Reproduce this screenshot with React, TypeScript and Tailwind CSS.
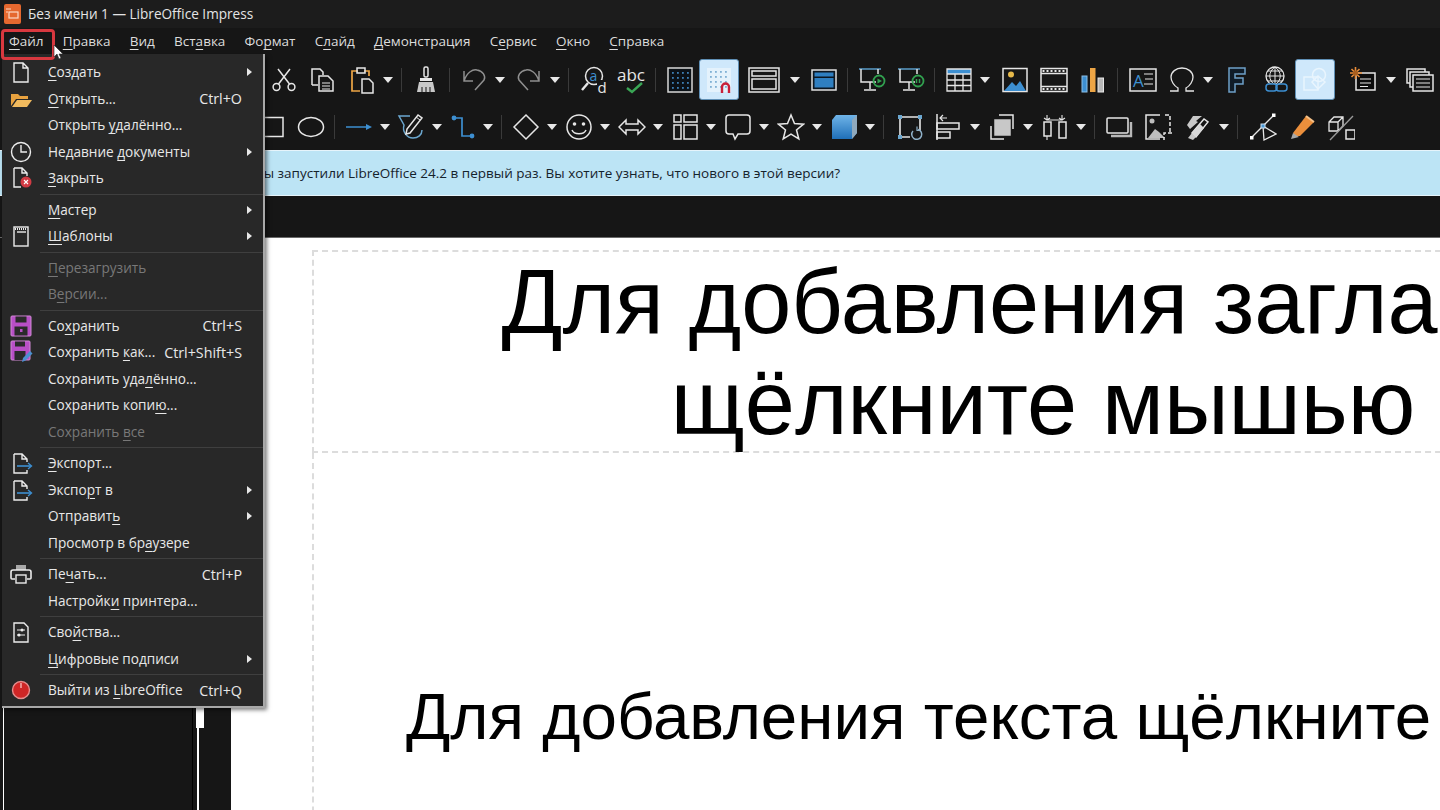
import type { ReactNode } from 'react'

const W = '#e6e6e6'
const BLUE = '#3d8fd1'

function Ic({ children, w = 28 }: { children: ReactNode; w?: number }) {
  return (
    <svg width={w} height={28} viewBox={`0 0 ${w} 28`} fill="none" stroke={W} strokeWidth="1.5">
      {children}
    </svg>
  )
}

function B({ children, className = 'w-[39px]' }: { children?: ReactNode; className?: string }) {
  return <div className={`flex h-[40px] shrink-0 items-center justify-center ${className}`}>{children}</div>
}

function Active({ children }: { children?: ReactNode }) {
  return (
    <div className="flex h-[41px] w-[40px] shrink-0 items-center justify-center rounded-[3px] border border-[#5f8fb5] bg-[#cfe8fb]">
      {children}
    </div>
  )
}

function A({ className = 'w-[14px]' }: { className?: string }) {
  return (
    <div className={`flex h-[40px] shrink-0 items-center pl-[2px] ${className}`}>
      <svg width="10" height="6" viewBox="0 0 10 6">
        <polygon points="0,0 10,0 5,6" fill="#e8e8e8" />
      </svg>
    </div>
  )
}

function S({ className = 'w-[9px]' }: { className?: string }) {
  return (
    <div className={`flex h-[40px] shrink-0 items-center justify-center ${className}`}>
      <div className="h-[24px] w-px bg-[#3a3a3a]" />
    </div>
  )
}

function Label({ text }: { text: string }) {
  const i = text.indexOf('&')
  if (i < 0) return <>{text}</>
  return (
    <>
      {text.slice(0, i)}
      <span className="underline decoration-1 underline-offset-[3px]">{text[i + 1]}</span>
      {text.slice(i + 2)}
    </>
  )
}

/* toolbar icons */
const Cut = () => (
  <Ic>
    <circle cx="6.5" cy="21" r="3.4" />
    <circle cx="21.5" cy="21" r="3.4" />
    <path d="M8.500 18 20 3M19.500 18 8 3" />
  </Ic>
)
const Copy = () => (
  <Ic>
    <path d="M3 19V3h8l3 3v3M3 19h6" />
    <path d="M10 10h9l5 5v10H10z" />
    <path d="M13 17h8M13 20h8M13 23h8" strokeWidth="1" />
  </Ic>
)
const Paste = () => (
  <Ic>
    <path d="M10 5H4v20h8" stroke="#eda545" strokeWidth="1.7" />
    <path d="M16 5h5v5" stroke="#eda545" strokeWidth="1.7" />
    <rect x="9" y="2" width="8" height="5" stroke="#e6e6e6" />
    <path d="M14 13h7l4 4v10H14z" fill="#161616" />
  </Ic>
)
const Brush = () => (
  <Ic>
    <rect x="12" y="1" width="4" height="10" rx="1.500" />
    <path d="M8 12h12v3H8z" fill={W} stroke="none" />
    <path d="M7 16h14l2 10H5z" fill="#c8c8c8" stroke="none" />
    <path d="M10 21v5M14 21v5M18 21v5" stroke="#161616" strokeWidth="1" />
  </Ic>
)
const Undo = () => (
  <Ic>
    <g stroke="#8f8f8f" transform="translate(28 0) scale(-1 1)">
      <path d="M24 5v10H15M24 15C21 6 15 3 11 4 5 5 2 10 4 14l9 10" />
    </g>
  </Ic>
)
const Redo = () => (
  <Ic>
    <g stroke="#8f8f8f">
      <path d="M24 5v10H15M24 15C21 6 15 3 11 4 5 5 2 10 4 14l9 10" />
    </g>
  </Ic>
)
const Find = () => (
  <Ic>
    <circle cx="15" cy="10" r="8.500" />
    <path d="M9 17 3 24" strokeWidth="2.400" />
    <text x="10.500" y="15" fontSize="14" fill={BLUE} stroke="none" fontFamily="Open Sans, sans-serif">a</text>
    <rect x="18" y="14" width="9" height="14" fill="#161616" stroke="none" />
    <text x="18.500" y="27" fontSize="15" fill={W} stroke="none" fontFamily="Open Sans, sans-serif">d</text>
  </Ic>
)
const Spell = () => (
  <Ic w={32}>
    <text x="1" y="15" fontSize="17" fill={W} stroke="none" fontFamily="Open Sans, sans-serif">abc</text>
    <path d="M11 22l5 4 10-9" stroke="#3aa655" strokeWidth="2.4" />
  </Ic>
)
const Grid = () => (
  <Ic>
    <rect x="2" y="2" width="24" height="24" fill="#0b1116" stroke="#d8d8d8" />
    <g fill="#3d7fb3">
      {[6, 11, 16, 21].flatMap(x => [6, 11, 16, 21].map(y => <rect key={`${x}${y}`} x={x} y={y} width="1.800" height="1.800" stroke="none" />))}
    </g>
  </Ic>
)
const Snap = () => (
  <Ic>
    <rect x="2" y="2" width="24" height="24" fill="#e4f2fc" stroke="none" />
    <g fill="#7fb0d4">
      {[5, 10, 15, 20].flatMap(x => [5, 10, 15, 20].map(y => <rect key={`${x}${y}`} x={x} y={y} width="1.800" height="1.800" stroke="none" />))}
    </g>
    <path d="M17 27v-6a3.200 3.200 0 0 1 7 0v6" stroke="#c8203a" strokeWidth="2.400" />
  </Ic>
)
const Display = () => (
  <Ic w={32}>
    <rect x="1" y="2" width="30" height="24" />
    <rect x="4" y="5" width="24" height="5" />
    <rect x="4" y="13" width="24" height="10" />
  </Ic>
)
const Master = () => (
  <Ic>
    <rect x="2" y="4" width="24" height="20" fill="#0c1620" stroke="#e0e0e0" />
    <rect x="4.500" y="6.500" width="19" height="4" fill="#2f7fc1" stroke="none" />
    <rect x="4.500" y="12" width="19" height="9.500" fill="#2f7fc1" stroke="none" />
  </Ic>
)
const Present = ({ pause }: { pause?: boolean }) => (
  <Ic>
    <path d="M1 3h22" stroke="#5a9cc9" />
    <path d="M3 3v13h15M20 3v5" />
    <path d="M12 16v7M6 24h12" />
    <circle cx="21" cy="15" r="5.500" stroke="#31a04f" strokeWidth="1.800" />
    {pause ? <path d="M19.500 13v4M22.500 13v4" stroke="#31a04f" /> : <polygon points="19.500,12.500 24,15 19.500,17.500" fill="#31a04f" stroke="none" />}
  </Ic>
)
const Table = () => (
  <Ic>
    <rect x="2" y="3" width="24" height="5" fill="#3d8fd1" stroke="none" />
    <path d="M2 3h24v22H2zM2 8h24M2 14h24M2 19.500h24M10 8v17M18 8v17" strokeWidth="1.300" />
  </Ic>
)
const ImageIc = () => (
  <Ic>
    <rect x="2" y="2.500" width="24" height="23" />
    <path d="M3 25l8-9 4 4 4-5 6 10z" fill={BLUE} stroke="none" />
    <circle cx="10" cy="8.500" r="3" fill="#e6b94a" stroke="none" />
  </Ic>
)
const Film = () => (
  <Ic>
    <rect x="1" y="2.500" width="26" height="23" />
    <path d="M1 7.500h26M1 20.500h26" />
    <path d="M2.500 5h23M2.500 23h23" strokeDasharray="2 2" strokeWidth="2" />
  </Ic>
)
const Chart = () => (
  <Ic>
    <rect x="3" y="10" width="5" height="16" fill={BLUE} stroke="#8cc0e8" strokeWidth="1" />
    <rect x="11" y="2" width="5.500" height="24" fill="#eda545" stroke="none" />
    <rect x="19" y="12" width="5.500" height="14" fill="#b8b8b8" stroke={W} strokeWidth="1" />
  </Ic>
)
const TextBox = () => (
  <Ic>
    <rect x="1" y="3" width="26" height="22" />
    <text x="4" y="21" fontSize="17" fill={BLUE} stroke="none" fontFamily="Open Sans, sans-serif">A</text>
    <path d="M15 8h9M16 13h8M15 18h9" strokeWidth="1.200" />
  </Ic>
)
const Omega = () => (
  <Ic>
    <path d="M2 25h8v-3C6 20 3 15 3 11 3 6 8 2 14 2s11 4 11 9c0 4-3 9-7 11v3h8" strokeWidth="1.300" />
  </Ic>
)
const Fontwork = () => (
  <Ic>
    <path d="M6 26V2h16v6H12v4h8v6h-8v8z" stroke="#6ea0c8" fill="#101c28" strokeWidth="1.500" />
  </Ic>
)
const Link = () => (
  <Ic>
    <circle cx="13" cy="10" r="9" strokeWidth="1.300" />
    <path d="M4 10h18M6 5h14M6 15h14M13 1v18M13 1c-7 5-7 13 0 18M13 1c7 5 7 13 0 18" strokeWidth="1" />
    <rect x="4" y="18" width="11" height="7" rx="3" stroke={BLUE} fill="#161616" strokeWidth="1.500" />
    <rect x="14" y="18" width="11" height="7" rx="3" stroke={BLUE} strokeWidth="1.500" />
  </Ic>
)
const Shapes = () => (
  <Ic>
    <g stroke="#e9f5fe" strokeWidth="1.500">
      <rect x="3" y="11" width="14" height="13" />
      <circle cx="18" cy="9" r="6.500" />
      <path d="M17 10l7 6-7 7-6-7z" />
    </g>
  </Ic>
)
const Anim = () => (
  <Ic>
    <rect x="7" y="7" width="19" height="17" fill="#0c0c0c" />
    <path d="M11 13h11M11 17h11M11 20.500h8" strokeWidth="1" />
    <path d="M6.500 1v12M1 7h12M2.500 3l8 8M10.500 3l-8 8" stroke="#e88c3a" strokeWidth="1.600" />
    <circle cx="6.500" cy="7" r="2.600" fill="#a95f1f" stroke="none" />
  </Ic>
)
const Slide = () => (
  <Ic>
    <rect x="1" y="3" width="18" height="14" />
    <rect x="4" y="6" width="19" height="15" fill="#161616" />
    <rect x="7" y="9" width="20" height="16" fill="#161616" />
    <path d="M10 13h14M10 17h14M10 21h14" strokeWidth="1.200" />
  </Ic>
)
const Rect = () => (
  <Ic>
    <rect x="3" y="4.500" width="22" height="19" />
  </Ic>
)
const Ellipse = () => (
  <Ic>
    <ellipse cx="14" cy="14" rx="12.500" ry="9.500" />
  </Ic>
)
const LineArrow = () => (
  <Ic>
    <path d="M1 14h21" stroke={BLUE} />
    <polygon points="21,11 27,14 21,17" fill={BLUE} stroke="none" />
  </Ic>
)
const Curve = () => (
  <Ic>
    <path d="M13 3H2l5 9c-2 7 3 13 9 13 5 0 9-3 9-8" stroke="#6ba7cf" />
    <path d="M9 21l1-5L21 2l4 3-12 15z" fill="#161616" />
    <path d="M19 4l4 3" strokeWidth="1" />
  </Ic>
)
const Connector = () => (
  <Ic>
    <path d="M5 5h8v18h10" stroke={BLUE} strokeWidth="1.700" />
    <circle cx="5" cy="5" r="2.400" fill={BLUE} stroke="none" />
    <circle cx="23" cy="23" r="2.400" fill={BLUE} stroke="none" />
  </Ic>
)
const Diamond = () => (
  <Ic>
    <path d="M14 2 26 14 14 26 2 14z" />
  </Ic>
)
const Smile = () => (
  <Ic>
    <circle cx="14" cy="14" r="12" />
    <circle cx="9.500" cy="11" r="1.800" fill={W} stroke="none" />
    <circle cx="18.500" cy="11" r="1.800" fill={W} stroke="none" />
    <path d="M7 17c2 5 12 5 14 0" />
  </Ic>
)
const DblArrow = () => (
  <Ic>
    <path d="M8 7 1 14l7 7v-4h12v4l7-7-7-7v4H8z" />
  </Ic>
)
const Layout = () => (
  <Ic>
    <path d="M3 2h7v7H3zM13 2h13v7H13zM3 12h7v14H3zM13 12h13v14H13z" />
  </Ic>
)
const Callout = () => (
  <Ic>
    <path d="M5 2h18a3 3 0 0 1 3 3v13a3 3 0 0 1-3 3h-9l-3 5-2-5H5a3 3 0 0 1-3-3V5a3 3 0 0 1 3-3z" />
  </Ic>
)
const Star = () => (
  <Ic>
    <path d="M14 2l3.500 8.500 9 .7-7 5.800 2.300 9-7.800-4.800L6.200 26l2.300-9-7-5.800 9-.7z" />
  </Ic>
)
const Cube = () => (
  <Ic>
    <defs>
      <linearGradient id="cube" x1="0" y1="0" x2="0" y2="1">
        <stop offset="0" stopColor="#6fb4e8" />
        <stop offset="1" stopColor="#1f6fb8" />
      </linearGradient>
    </defs>
    <path d="M6 2h21v18l-5 6H2V7z" fill="url(#cube)" stroke="none" />
    <path d="M22 7v19l5-6V2z" fill="#8fa9bd" stroke="none" />
  </Ic>
)
const Rotate = () => (
  <Ic>
    <path d="M4 4h20v13M4 4v20h10" strokeWidth="1.600" />
    <g fill="#6ba7cf" stroke="none">
      <rect x="2" y="2" width="4" height="4" />
      <rect x="22" y="2" width="4" height="4" />
      <rect x="2" y="22" width="4" height="4" />
    </g>
    <path d="M17 18a5 5 0 1 0 5-1.500" stroke="#8fb1c9" />
    <path d="M21 13.500v4h4" stroke="#8fb1c9" strokeWidth="1.200" />
  </Ic>
)
const Align = () => (
  <Ic>
    <path d="M2 1v26" />
    <path d="M12 5H5m3-3L5 5l3 3" strokeWidth="1.200" />
    <rect x="2" y="10" width="22" height="6" />
    <rect x="2" y="19" width="13" height="6" />
  </Ic>
)
const Arrange = () => (
  <Ic>
    <path d="M11 2h14v14M3 13v13h13" />
    <rect x="7" y="7" width="15" height="15" fill="#c8c8c8" stroke="#c8c8c8" />
  </Ic>
)
const Distribute = () => (
  <Ic>
    <rect x="3" y="9" width="7" height="14" />
    <rect x="18" y="9" width="7" height="16" />
    <path d="M6 2v5M21 2v5M3 5l3 2 3-2M18 5l3 2 3-2M6 7h15M6 23v4" strokeWidth="1.100" />
  </Ic>
)
const Shadow = () => (
  <Ic>
    <rect x="1" y="5" width="21" height="15" rx="1" />
    <path d="M25 9v14H5" stroke="#b8b8b8" strokeWidth="2.400" />
  </Ic>
)
const Crop = () => (
  <Ic>
    <path d="M15 2H1v24h14" />
    <path d="M3 25l7-9 4 3 6 6z" fill="#bdbdbd" stroke="none" />
    <circle cx="7" cy="8" r="2.500" fill="#bdbdbd" stroke="none" />
    <path d="M20 2h5v18M27 20H19v7" strokeDasharray="4 2" />
  </Ic>
)
const Filter = () => (
  <Ic>
    <path d="M3 12 9 3h9l-6 5 2 1-8 7z" fill="#c8c8c8" stroke="none" />
    <path d="M8 20 20 6l4 3-12 15z" />
    <path d="M4 25l4-5 4 4-3 3z" fill="#c8c8c8" stroke="none" />
    <path d="M8 20 16 11l4 4-8 9z" fill="#d8d8d8" stroke="none" />
  </Ic>
)
const Points = () => (
  <Ic>
    <path d="M25 2 2 25M14 13l13 8-12 6z" strokeWidth="1.300" />
    <rect x="23" y="0.500" width="3.500" height="3.500" fill="#fff" stroke="none" />
    <rect x="1" y="23" width="3.500" height="3.500" fill="#fff" stroke="none" />
    <rect x="12" y="11" width="4" height="4" fill="#4a9ad6" stroke="#cde" strokeWidth="1" />
  </Ic>
)
const Marker = () => (
  <Ic>
    <path d="M5 20 18 3l8 6-14 14-5 0z" fill="#ea8f3c" stroke="none" />
    <path d="M18 3l8 6" stroke="#f4c189" strokeWidth="2" />
    <path d="M5 20l-2 6 8-2z" fill="#a8a8a8" stroke="none" />
  </Ic>
)
const Toggle3d = () => (
  <Ic>
    <path d="M2 9l5-5h9v9l-5 5H2zM2 9h9v9M11 9l5-5" strokeWidth="1.300" />
    <path d="M3 27 26 3" stroke="#9a9a9a" strokeWidth="1.300" />
    <rect x="19" y="17" width="9" height="9" strokeWidth="1.500" />
  </Ic>
)

/* menu icons */
const Mi = ({ children }: { children: ReactNode }) => (
  <svg width="24" height="24" viewBox="0 0 24 24" fill="none" stroke="#ececec" strokeWidth="1.400">
    {children}
  </svg>
)
const MNew = () => (
  <Mi>
    <path d="M5 3h9l5 5v14H5zM14 3v5h5" />
  </Mi>
)
const MOpen = () => (
  <Mi>
    <path d="M2 19V7h7l2 2h8v3H7l-5 7z" fill="#e8a23f" stroke="none" />
    <path d="M3 20l5-7h15l-5 7z" fill="#f2bb5e" stroke="none" />
  </Mi>
)
const MClock = () => (
  <Mi>
    <circle cx="12" cy="12" r="9.500" />
    <path d="M12 5v7h6" />
  </Mi>
)
const MClose = () => (
  <Mi>
    <path d="M5 2h8l5 5v3M5 2v19h7M13 2v5h5" />
    <circle cx="17" cy="16" r="5.500" fill="#d33b44" stroke="none" />
    <path d="M15 14l4 4M19 14l-4 4" stroke="#fff" strokeWidth="1.100" />
  </Mi>
)
const MTemplate = () => (
  <Mi>
    <rect x="5" y="3" width="14" height="19" />
    <path d="M6 5h12" strokeDasharray="1 1" strokeWidth="2" />
    <path d="M8 8h9" />
  </Mi>
)
const MSave = () => (
  <Mi>
    <rect x="2" y="2" width="20" height="20" rx="1" fill="#b84fc6" stroke="#d08ad4" strokeWidth="1" />
    <rect x="6.500" y="2.500" width="11" height="6" fill="#2a2a2a" stroke="none" />
    <rect x="5.500" y="12.500" width="13" height="9" fill="#2a2a2a" stroke="none" />
    <rect x="11" y="15" width="2.500" height="3" fill="#b84fc6" stroke="none" />
  </Mi>
)
const MSaveAs = () => (
  <Mi>
    <rect x="2" y="1" width="19" height="19" rx="1" fill="#b84fc6" stroke="#d08ad4" strokeWidth="1" />
    <rect x="6" y="1.500" width="10" height="5" fill="#2a2a2a" stroke="none" />
    <rect x="5.500" y="11" width="11" height="9" fill="#2a2a2a" stroke="none" />
    <path d="M13 22l1-4 7-7 2.500 2.500-7 7z" fill="#4a90d0" stroke="none" />
  </Mi>
)
const MExport = () => (
  <Mi>
    <path d="M5 3h8l5 5v3M5 3v19h13v-3M13 3v5h5" />
    <path d="M8 15h14" stroke="#3d8fd1" strokeWidth="1.600" />
    <path d="M19 12l3.500 3-3.500 3" stroke="#3d8fd1" />
  </Mi>
)
const MPrint = () => (
  <Mi>
    <path d="M7 3h10v5H7z" fill="#a8a8a8" stroke="none" />
    <path d="M6 17H3a1 1 0 0 1-1-1V10a2 2 0 0 1 2-2h16a2 2 0 0 1 2 2v6a1 1 0 0 1-1 1h-3" strokeWidth="1.600" />
    <rect x="7" y="13" width="10" height="8" />
  </Mi>
)
const MProps = () => (
  <Mi>
    <path d="M5 3h10l4 4v15H5z" />
    <path d="M8 10h8M8 15h8" strokeWidth="1.100" />
    <circle cx="13" cy="10" r="1.500" fill="#ececec" stroke="none" />
    <circle cx="10" cy="15" r="1.500" fill="#ececec" stroke="none" />
  </Mi>
)
const MExit = () => (
  <Mi>
    <circle cx="12" cy="12" r="8.500" fill="#cf2626" stroke="#e58d8d" strokeWidth="1.400" />
    <path d="M12 5v5" stroke="#f5b8b8" />
  </Mi>
)

type Item = { label: string; icon?: ReactNode; key?: string; sub?: boolean; off?: boolean }

const menu: Item[][] = [
  [
    { label: '&Создать', icon: <MNew />, sub: true },
    { label: '&Открыть...', icon: <MOpen />, key: 'Ctrl+O' },
    { label: 'Открыть &удалённо...' },
    { label: 'Недавние &документы', icon: <MClock />, sub: true },
    { label: '&Закрыть', icon: <MClose /> },
  ],
  [
    { label: '&Мастер', sub: true },
    { label: '&Шаблоны', icon: <MTemplate />, sub: true },
  ],
  [
    { label: '&Перезагрузить', off: true },
    { label: 'В&ерсии...', off: true },
  ],
  [
    { label: 'Со&хранить', icon: <MSave />, key: 'Ctrl+S' },
    { label: 'Сохранить &как...', icon: <MSaveAs />, key: 'Ctrl+Shift+S' },
    { label: 'Сохранить уда&лённо...' },
    { label: 'Сохранить копи&ю...' },
    { label: 'Сохранить &все', off: true },
  ],
  [
    { label: '&Экспорт...', icon: <MExport /> },
    { label: 'Экспо&рт в', icon: <MExport />, sub: true },
    { label: 'Отправит&ь', sub: true },
    { label: 'Просмотр в бр&аузере' },
  ],
  [
    { label: 'Пе&чать...', icon: <MPrint />, key: 'Ctrl+P' },
    { label: 'Настройк&и принтера...' },
  ],
  [
    { label: 'Сво&йства...', icon: <MProps /> },
    { label: '&Цифровые подписи', sub: true },
  ],
  [{ label: 'Выйти из &LibreOffice', icon: <MExit />, key: 'Ctrl+Q' }],
]

const topMenu = ['&Файл', '&Правка', '&Вид', 'Вст&авка', 'Фо&рмат', 'С&лайд', '&Демонстрация', 'С&ервис', '&Окно', '&Справка']

function FileMenu() {
  return (
    <div className="absolute left-[2px] top-[54px] z-10 w-[263px] border-r-2 border-b-2 border-[#a8a8a8] bg-[#282828] pt-[5px] pb-[2px] text-[13.6px] text-[#e8e8e8] shadow-[2px_2px_4px_rgba(0,0,0,0.5)]">
      {menu.map((group, g) => (
        <div key={g} className={g > 0 ? 'ml-[38px] mt-[2px] border-t border-[#3f3f3f] pt-[2px]' : ''}>
          {group.map(it => (
            <div key={it.label} className={`flex h-[26.5px] items-center ${g > 0 ? '-ml-[38px]' : ''} ${it.off ? 'text-[#787878]' : ''}`}>
              <div className="flex w-[38px] shrink-0 justify-center">{it.icon}</div>
              <div className="ml-[8px] flex-1 whitespace-nowrap"><Label text={it.label} /></div>
              {it.key && <div className="mr-[21px] whitespace-nowrap text-[14.3px]">{it.key}</div>}
              {it.sub && (
                <svg width="5" height="8" viewBox="0 0 5 8" className="mr-[11px]">
                  <polygon points="0,0 5,4 0,8" fill="#e8e8e8" />
                </svg>
              )}
            </div>
          ))}
        </div>
      ))}
    </div>
  )
}

export default function App() {
  return (
    <div className="relative flex h-[810px] w-[1440px] flex-col overflow-hidden bg-white font-['Open_Sans',sans-serif]">
      {/* title bar */}
      <div className="flex h-[28px] shrink-0 items-center gap-[7px] bg-[#1c1c1c] pl-[4px] text-[13.6px] text-[#e4e4e4]">
        <svg width="17" height="20" viewBox="0 0 17 20">
          <rect width="17" height="20" rx="2" fill="#e5682f" />
          <rect x="5" y="8" width="9" height="6" fill="none" stroke="#fbd9c6" strokeWidth="1.200" />
          <path d="M2 5h5M2 8h2" stroke="#fbd9c6" />
        </svg>
        Без имени 1 — LibreOffice Impress
      </div>

      {/* menu bar */}
      <div className="flex h-[28px] shrink-0 items-center gap-[19.2px] bg-[#161616] pb-[1px] pl-[9px] text-[13.5px] text-[#dcdcdc]">
        {topMenu.map(m => (
          <div key={m}><Label text={m} /></div>
        ))}
      </div>

      {/* standard toolbar */}
      <div className="flex h-[47px] shrink-0 items-center bg-[#161616] pl-[264px]">
        <B><Cut /></B>
        <B><Copy /></B>
        <B><Paste /></B>
        <A className="w-[16px]" />
        <S />
        <B><Brush /></B>
        <S />
        <B><Undo /></B>
        <A className="w-[16px]" />
        <B><Redo /></B>
        <A className="w-[16px]" />
        <S />
        <B><Find /></B>
        <B><Spell /></B>
        <S />
        <B><Grid /></B>
        <Active><Snap /></Active>
        <B className="w-[49px]"><Display /></B>
        <A className="w-[16px]" />
        <B><Master /></B>
        <S />
        <B><Present /></B>
        <B><Present pause /></B>
        <S />
        <B><Table /></B>
        <A className="w-[17px]" />
        <B><ImageIc /></B>
        <B><Film /></B>
        <B><Chart /></B>
        <S className="w-[11px]" />
        <B><TextBox /></B>
        <B><Omega /></B>
        <A className="w-[16px]" />
        <B><Fontwork /></B>
        <B><Link /></B>
        <Active><Shapes /></Active>
        <B className="w-[49px] pl-[6px]"><Anim /></B>
        <A className="w-[16px]" />
        <B><Slide /></B>
      </div>

      {/* drawing toolbar */}
      <div className="flex h-[47px] shrink-0 items-center bg-[#161616] pl-[252px]">
        <B><Rect /></B>
        <B><Ellipse /></B>
        <S />
        <B><LineArrow /></B>
        <A />
        <B className="w-[38px]"><Curve /></B>
        <A />
        <B className="w-[37px]"><Connector /></B>
        <A className="w-[16px]" />
        <S />
        <B><Diamond /></B>
        <A />
        <B><Smile /></B>
        <A />
        <B><DblArrow /></B>
        <A />
        <B><Layout /></B>
        <A />
        <B><Callout /></B>
        <A />
        <B><Star /></B>
        <A />
        <B><Cube /></B>
        <A />
        <S className="w-[13px]" />
        <B><Rotate /></B>
        <B><Align /></B>
        <A />
        <B><Arrange /></B>
        <A />
        <B><Distribute /></B>
        <A />
        <S className="w-[12px]" />
        <B><Shadow /></B>
        <B><Crop /></B>
        <B><Filter /></B>
        <A />
        <S className="w-[12px]" />
        <B><Points /></B>
        <B><Marker /></B>
        <B><Toggle3d /></B>
      </div>

      {/* infobar */}
      <div className="flex h-[46px] shrink-0 items-center border-y border-[#e6f4fb] bg-[#bce4f5] pl-[255px] pt-[1px] text-[13.5px] text-[#15222b]">
        Вы запустили LibreOffice 24.2 в первый раз. Вы хотите узнать, что нового в этой версии?
      </div>

      {/* sidebar tab strip */}
      <div className="h-[42px] shrink-0 border-b border-[#6a6a6a] bg-[#161616]" />

      <div className="flex min-h-0 flex-1">
        {/* slide sorter */}
        <div className="flex w-[231px] shrink-0 bg-[#161616] pl-[3px]">
          <div className="w-px bg-white" />
          <div className="flex-1" />
          <div className="mr-[27px] flex w-[12px] flex-col items-start border-l border-black pl-[3px]">
            <div className="h-[490px] w-[8px] bg-white" />
            <div className="ml-[1px] w-[2px] flex-1 bg-white" />
          </div>
        </div>

        {/* slide */}
        <div className="min-w-0 flex-1 bg-white pl-[81px] pt-[12px]">
          <div className="h-[203px] w-[1460px] border-t-2 border-b-2 border-l-2 border-dashed border-[#dcdcdc] text-center font-['Liberation_Sans',sans-serif] text-[90px] leading-[101px] whitespace-nowrap text-black">
            <div>Для добавления заглавия</div>
            <div>щёлкните мышью</div>
          </div>
          <div className="h-[400px] w-[1460px] border-l-2 border-dashed border-[#dcdcdc] pl-[92px] pt-[227px] font-['Liberation_Sans',sans-serif] text-[65.5px] leading-[74px] whitespace-nowrap text-black">
            Для добавления текста щёлкните мышью
          </div>
        </div>
      </div>

      {/* red highlight on the file menu, drawn over the screenshot */}
      <div className="absolute left-[1px] top-[29px] z-20 h-[31px] w-[54px] rounded-[4px] border-[3px] border-[#d8383f]" />
      <svg width="10" height="15" viewBox="0 0 10 15" className="absolute left-[53px] top-[45px] z-20">
        <path d="M1 0v12l3-3 2 5 2-1-2-4h4z" fill="#fff" stroke="#222" strokeWidth="0.600" />
      </svg>

      <FileMenu />
    </div>
  )
}
